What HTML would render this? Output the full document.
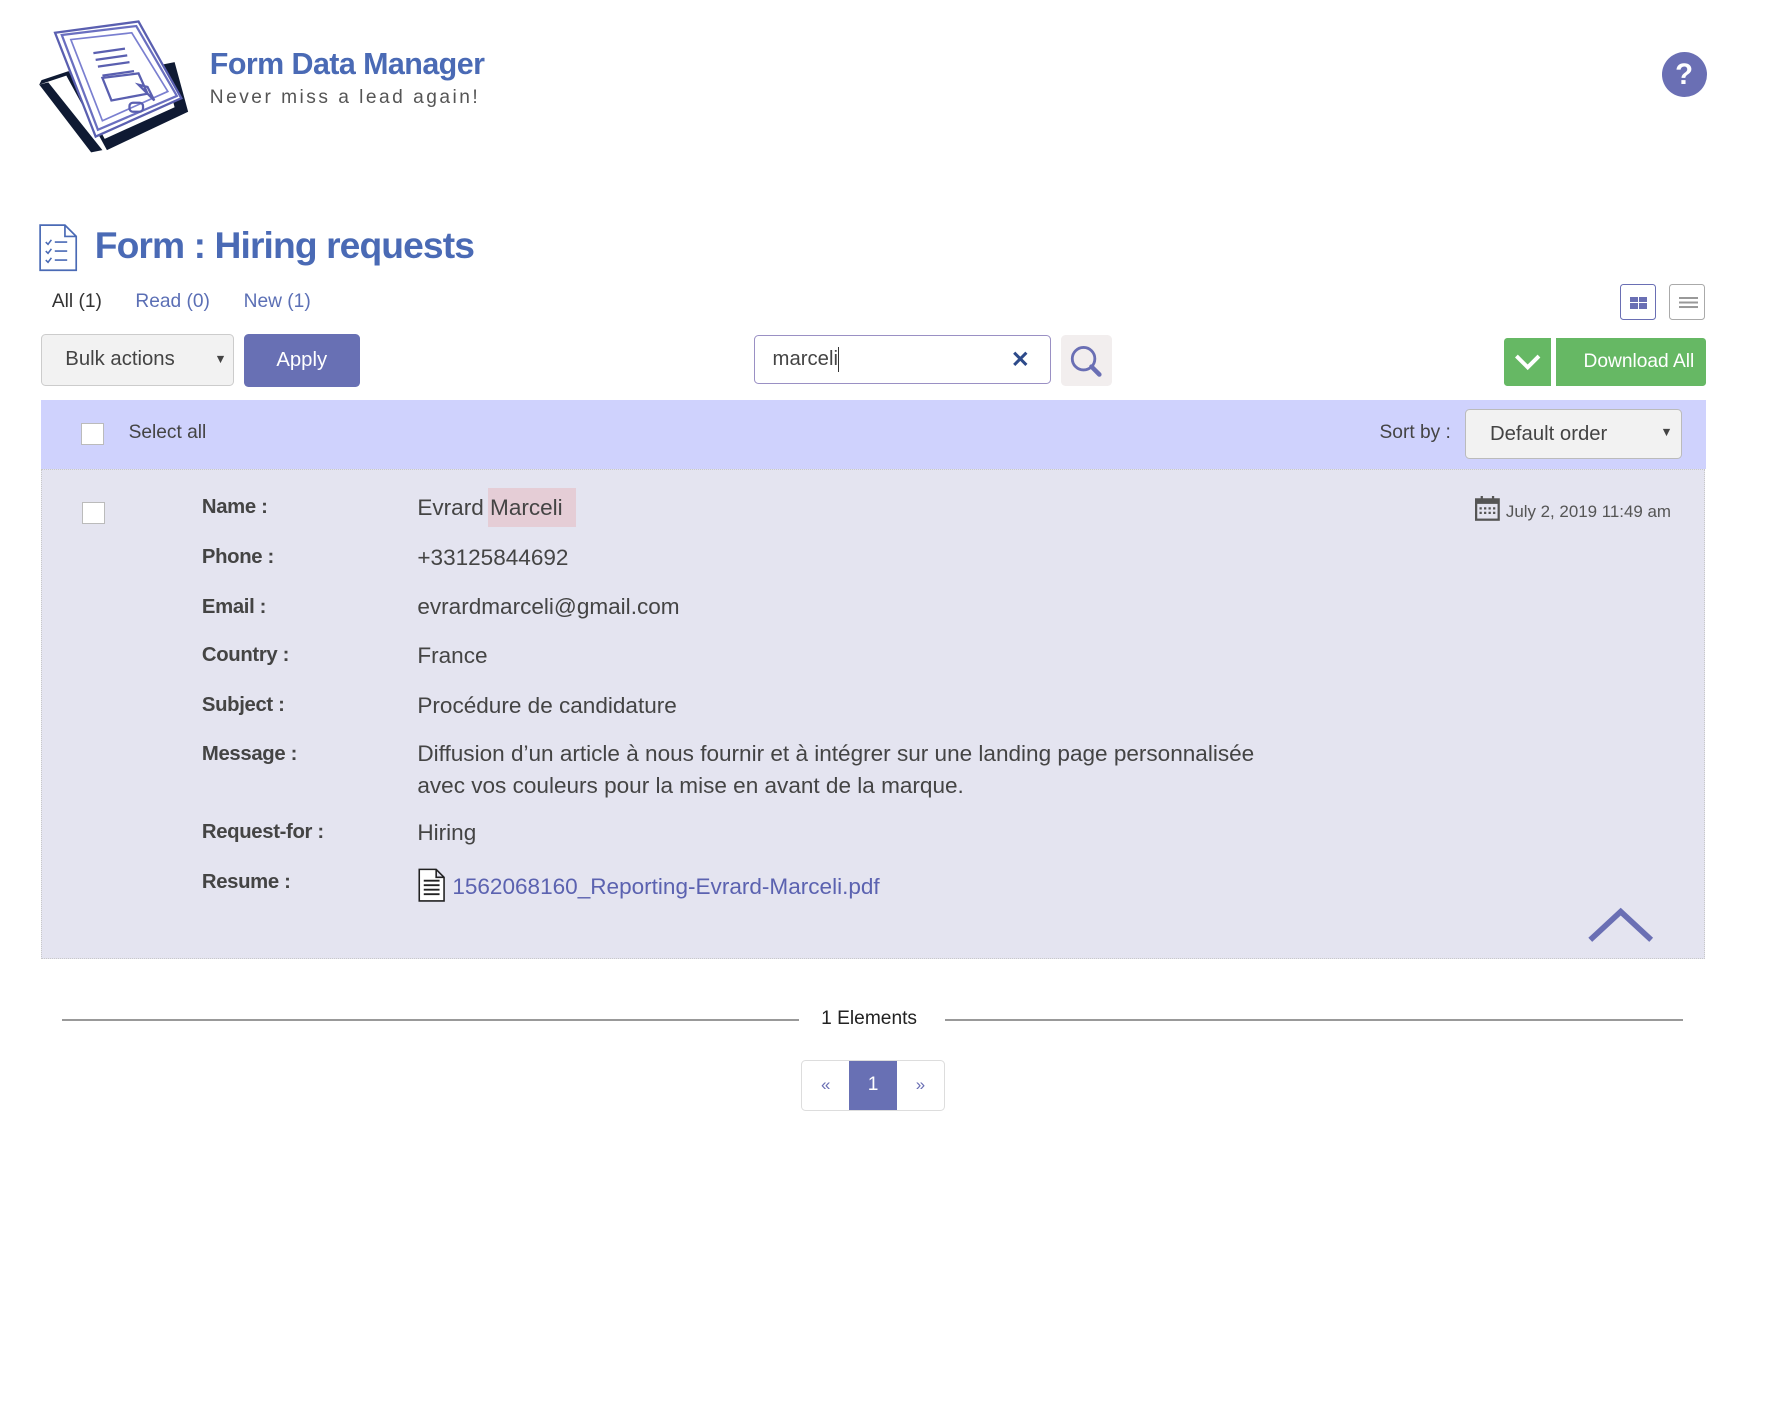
<!DOCTYPE html>
<html><head><meta charset="utf-8"><style>
html,body{margin:0;padding:0;background:#fff;overflow:hidden}
#w{position:relative;width:1567px;height:1263px;zoom:1.128;font-family:"Liberation Sans",sans-serif;color:#444}
.a{position:absolute;white-space:nowrap}
.lab{position:absolute;left:179px;font-weight:bold;font-size:18px;color:#444;letter-spacing:-0.3px}
.val{position:absolute;left:370px;font-size:20px;color:#444}
</style></head><body><div id="w">
<svg class="a" style="left:33px;top:15px" width="140" height="125" viewBox="0 0 140 125">
<path d="M2 60 L26 52 L62 118 L134 84 L122 40 L112 42 L122 80 L60 108 L28 48 L4 56 Z" fill="#0f1a33"/>
<path d="M2 60 L48 120 L58 118 L10 58 Z" fill="#0f1a33"/>
<path d="M16 14 L90 4 L128 72 L52 106 Z" fill="#fff" stroke="#5a5fb0" stroke-width="2"/>
<path d="M22 16 L88 8 L124 70 L54 100 Z" fill="none" stroke="#6a6fc0" stroke-width="2"/>
<path d="M30 20 L84 14 L116 66 L58 92 Z" fill="none" stroke="#7a7fd0" stroke-width="1.5"/>
<path d="M50 32 L78 28 M52 38 L80 34 M54 44 L82 40 M58 52 L86 48" stroke="#5a5fb0" stroke-width="2"/>
<path d="M58 54 L90 50 L98 68 L66 74 Z M90 60 L104 74 L98 62 Z" fill="none" stroke="#5a5fb0" stroke-width="2"/>
<rect x="82" y="76" width="12" height="8" rx="3" fill="none" stroke="#5a5fb0" stroke-width="2"/>
</svg>
<div class="a" style="left:186px;top:42px;font-size:27px;font-weight:bold;color:#4a6ab5;letter-spacing:-0.5px">Form Data Manager</div>
<div class="a" style="left:186px;top:77px;font-size:17px;color:#555;letter-spacing:2.2px">Never miss a lead again!</div>
<div class="a" style="left:1473px;top:46px;width:40px;height:40px;border-radius:50%;background:#6a6fb4;color:#fff;font-weight:bold;font-size:26px;text-align:center;line-height:40px">?</div>
<svg class="a" style="left:35px;top:199px" width="34" height="42" viewBox="0 0 34 42"><path d="M1 1 H23 L33 11 V41 H1 Z M23 1 V11 H33" fill="#fff" stroke="#4a6ab5" stroke-width="1.5"/><path d="M6 16 l2 2 l3-4 M6 24 l2 2 l3-4 M6 32 l2 2 l3-4 M14 16 H25 M14 24 H25 M14 32 H25" stroke="#4a6ab5" stroke-width="1.4" fill="none"/></svg>
<div class="a" style="left:84px;top:199px;font-size:33px;font-weight:bold;color:#4a6ab5;letter-spacing:-0.8px">Form : Hiring requests</div>
<div class="a" style="left:46px;top:258px;font-size:17px;color:#333">All (1)</div>
<div class="a" style="left:120px;top:258px;font-size:17px;color:#5b6fb5">Read (0)</div>
<div class="a" style="left:216px;top:258px;font-size:17px;color:#5b6fb5">New (1)</div>
<div class="a" style="left:1436px;top:252px;width:30px;height:30px;border:1.5px solid #6a6fb4;border-radius:3px"><div style="position:absolute;left:8px;top:10px;width:7px;height:5px;background:#6a6fb4"></div><div style="position:absolute;left:16px;top:10px;width:7px;height:5px;background:#6a6fb4"></div><div style="position:absolute;left:8px;top:16px;width:7px;height:5px;background:#6a6fb4"></div><div style="position:absolute;left:16px;top:16px;width:7px;height:5px;background:#6a6fb4"></div></div>
<div class="a" style="left:1480px;top:252px;width:30px;height:30px;border:1.5px solid #aaa;border-radius:3px"><div style="position:absolute;left:8px;top:10px;width:16px;height:2px;background:#999;box-shadow:0 4px #999,0 8px #999"></div></div>
<div class="a" style="left:36px;top:296px;width:170px;height:44px;border:1.5px solid #ccc;border-radius:4px;background:#f2f2f2;font-size:18px;color:#444;line-height:44px;text-indent:21px">Bulk actions<span style="position:absolute;right:6px;font-size:11px">▼</span></div>
<div class="a" style="left:216px;top:296px;width:103px;height:47px;border-radius:4px;background:#6870b4;color:#fff;font-size:18px;text-align:center;line-height:47px">Apply</div>
<div class="a" style="left:668px;top:297px;width:262px;height:42px;border:1.5px solid #9a90c4;border-radius:4px;background:#fff;font-size:18px;color:#444;line-height:42px;text-indent:16px">marceli<span style="display:inline-block;width:1px;height:22px;background:#333;vertical-align:middle"></span><span style="position:absolute;right:18px;color:#2d4a8a;font-weight:bold;font-size:20px">✕</span></div>
<div class="a" style="left:941px;top:297px;width:45px;height:45px;background:#f2eeee;border-radius:4px"><svg width="45" height="45"><circle cx="20" cy="21" r="10" fill="none" stroke="#6a6fb4" stroke-width="2.5"/><path d="M27 28 L34 35" stroke="#6a6fb4" stroke-width="4" stroke-linecap="round"/></svg></div>
<div class="a" style="left:1333px;top:300px;width:42px;height:42px;background:#66b864;border-radius:3px 0 0 3px"><svg width="42" height="42"><path d="M11 16 L21 26 L31 16" stroke="#fff" stroke-width="3.5" fill="none"/></svg></div>
<div class="a" style="left:1379px;top:300px;width:133px;height:42px;background:#66b864;border-radius:0 3px 3px 0;color:#fff;font-size:17px;line-height:42px;text-align:right"><span style="margin-right:10px">Download All</span></div>
<div class="a" style="left:36px;top:355px;width:1476px;height:61px;background:#cfd2fd"></div>
<div class="a" style="left:72px;top:375px;width:18px;height:18px;background:#fff;border:1.5px solid #bbb"></div>
<div class="a" style="left:114px;top:374px;font-size:17px;color:#444">Select all</div>
<div class="a" style="left:1223px;top:374px;font-size:17px;color:#444">Sort by :</div>
<div class="a" style="left:1299px;top:363px;width:190px;height:42px;border:1.5px solid #bbb;border-radius:4px;background:#f2f2f2;font-size:18px;color:#444;line-height:44px;text-indent:21px">Default order<span style="position:absolute;right:7px;top:-2px;font-size:11px">▼</span></div>
<div class="a" style="left:36px;top:416px;width:1474px;height:432px;background:#e4e4f0;border:1px dotted #c8c8c8"></div>
<div class="a" style="left:73px;top:445px;width:18px;height:18px;background:#fff;border:1.5px solid #bbb"></div>
<div class="lab" style="top:440px">Name :</div><div class="val" style="top:439px">Evrard <span style="background:#e5cdd6;padding:6px 12px 6px 2px;margin-left:-2px">Marceli</span></div>
<div class="lab" style="top:484px">Phone :</div><div class="val" style="top:483px">+33125844692</div>
<div class="lab" style="top:528px">Email :</div><div class="val" style="top:527px">evrardmarceli@gmail.com</div>
<div class="lab" style="top:571px">Country :</div><div class="val" style="top:570px">France</div>
<div class="lab" style="top:615px">Subject :</div><div class="val" style="top:614px">Procédure de candidature</div>
<div class="lab" style="top:659px">Message :</div><div class="val" style="top:658px;line-height:29px;margin-top:-4px">Diffusion d’un article à nous fournir et à intégrer sur une landing page personnalisée<br>avec vos couleurs pour la mise en avant de la marque.</div>
<div class="lab" style="top:728px">Request-for :</div><div class="val" style="top:727px">Hiring</div>
<div class="lab" style="top:772px">Resume :</div>
<svg class="a" style="left:370px;top:768px" width="26" height="32" viewBox="0 0 26 32"><path d="M2 3 H17 L24 10 V31 H2 Z M17 3 V10 H24" fill="#fff" stroke="#222" stroke-width="1.4"/><path d="M6 13 H20 M6 17 H20 M6 21 H20 M6 25 H20" stroke="#222" stroke-width="1.6"/></svg>
<div class="a" style="left:401px;top:775px;font-size:20px;color:#5b62b0">1562068160_Reporting-Evrard-Marceli.pdf</div>
<svg class="a" style="left:1308px;top:440px" width="22" height="22" viewBox="0 0 22 22"><rect x="1" y="3" width="20" height="18" fill="none" stroke="#555" stroke-width="2"/><rect x="1" y="3" width="20" height="4" fill="#555"/><path d="M4 10h2v2H4zM8 10h2v2H8zM12 10h2v2h-2zM16 10h2v2h-2zM4 14h2v2H4zM8 14h2v2H8zM12 14h2v2h-2zM16 14h2v2h-2z" fill="#555"/><path d="M6 0v5M16 0v5" stroke="#555" stroke-width="2"/></svg>
<div class="a" style="left:1335px;top:445px;font-size:15px;color:#555">July 2, 2019 11:49 am</div>
<svg class="a" style="left:1408px;top:803px" width="58" height="32"><path d="M2 30 L29 5 L56 30" stroke="#6a6fb4" stroke-width="5" fill="none"/></svg>
<div class="a" style="left:55px;top:903px;width:653px;height:2px;background:#999"></div>
<div class="a" style="left:838px;top:903px;width:654px;height:2px;background:#999"></div>
<div class="a" style="left:728px;top:894px;font-size:17px;color:#222">1 Elements</div>
<div class="a" style="left:710px;top:940px;width:126px;height:43px;border:1.5px solid #ddd;border-radius:4px;background:#fff"></div>
<div class="a" style="left:753px;top:941px;width:42px;height:43px;background:#6870b4;color:#fff;font-size:17px;text-align:center;line-height:43px">1</div>
<div class="a" style="left:712px;top:941px;width:40px;line-height:43px;text-align:center;color:#6a6fb4;font-size:15px">«</div>
<div class="a" style="left:796px;top:941px;width:40px;line-height:43px;text-align:center;color:#6a6fb4;font-size:15px">»</div>
</div></body></html>
